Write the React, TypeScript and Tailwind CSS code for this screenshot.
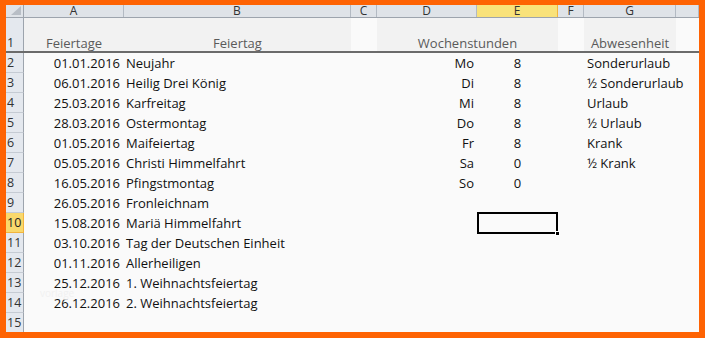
import React from "react";

const COLS = [
  { key: "A", w: "w-[100px]" },
  { key: "B", w: "w-[227px]" },
  { key: "C", w: "w-[26px]" },
  { key: "D", w: "w-[100px]" },
  { key: "E", w: "w-[81px]" },
  { key: "F", w: "w-[26px]" },
  { key: "G", w: "w-[92px]" },
];

const HOLIDAYS = [
  ["01.01.2016", "Neujahr"],
  ["06.01.2016", "Heilig Drei König"],
  ["25.03.2016", "Karfreitag"],
  ["28.03.2016", "Ostermontag"],
  ["01.05.2016", "Maifeiertag"],
  ["05.05.2016", "Christi Himmelfahrt"],
  ["16.05.2016", "Pfingstmontag"],
  ["26.05.2016", "Fronleichnam"],
  ["15.08.2016", "Mariä Himmelfahrt"],
  ["03.10.2016", "Tag der Deutschen Einheit"],
  ["01.11.2016", "Allerheiligen"],
  ["25.12.2016", "1. Weihnachtsfeiertag"],
  ["26.12.2016", "2. Weihnachtsfeiertag"],
  ["", ""],
];

const HOURS = [
  ["Mo", "8"],
  ["Di", "8"],
  ["Mi", "8"],
  ["Do", "8"],
  ["Fr", "8"],
  ["Sa", "0"],
  ["So", "0"],
];

const ABSENCE = ["Sonderurlaub", "½ Sonderurlaub", "Urlaub", "½ Urlaub", "Krank", "½ Krank"];

function RowHeader({ n, active }: { n: number; active?: boolean }) {
  return (
    <div
      className={
        "w-[18px] shrink-0 h-full flex items-center pt-[1px] pl-[1px] text-[12.5px] border-r border-b " +
        (active
          ? "bg-[#f9d86c] border-r-[#f2b43d] border-b-[#f2b43d] text-[#222]"
          : "bg-[#e4e8ee] border-r-[#9da4ad] border-b-[#c5cbd3] text-[#333]")
      }
    >
      {n}
    </div>
  );
}

export default function App() {
  return (
    <div className="w-[705px] h-[338px] bg-[#fe6303] pt-[5px] pl-[6px] pr-[6px] pb-[6px] font-['Open_Sans',sans-serif]">
      <div className="w-full h-full bg-[#fafafa] overflow-hidden relative">
        {/* column headers */}
        <div className="flex h-[13px] bg-[#dfe3e8] border-b border-[#9da4ad]">
          <div className="w-[18px] shrink-0 border-r border-[#9da4ad] relative overflow-hidden">
            <svg className="absolute right-[2px] bottom-[2px]" width="10" height="9" viewBox="0 0 10 9">
              <polygon points="10,0 10,9 0,9" fill="#b8bec6" />
            </svg>
          </div>
          {COLS.map((c) => (
            <div
              key={c.key}
              className={
                c.w +
                " shrink-0 flex items-end justify-center text-[12px] leading-[12px] border-r " +
                (c.key === "E"
                  ? "bg-[#f9e27a] border-[#f2b43d] text-[#333]"
                  : "border-[#b3bac3] text-[#333]")
              }
            >
              {c.key}
            </div>
          ))}
          <div className="flex-1 border-r border-[#b3bac3]" />
        </div>

        {/* row 1 */}
        <div className="flex h-[35px] border-b-2 border-[#6b6b6b] text-[#5a5a5a] text-[13px] leading-[16px]">
          <div className="w-[18px] shrink-0 flex items-end pl-[1px] bg-[#e4e8ee] border-r border-[#9da4ad] text-[#333] text-[12.5px]">
            1
          </div>
          <div className="w-[100px] shrink-0 bg-[#f2f2f2] flex items-end justify-center">Feiertage</div>
          <div className="w-[227px] shrink-0 bg-[#f2f2f2] flex items-end justify-center">Feiertag</div>
          <div className="w-[26px] shrink-0" />
          <div className="w-[181px] shrink-0 bg-[#f2f2f2] flex items-end justify-center">Wochenstunden</div>
          <div className="w-[26px] shrink-0" />
          <div className="w-[92px] shrink-0 bg-[#f2f2f2] flex items-end justify-center">Abwesenheit</div>
          <div className="flex-1" />
        </div>

        {/* data rows */}
        {HOLIDAYS.map(([date, name], i) => {
          const hours = HOURS[i];
          const absence = ABSENCE[i];
          const rowNum = i + 2;
          return (
            <div key={i} className="flex h-[20px] text-[13px] text-[#111]">
              <RowHeader n={rowNum} active={rowNum === 10} />
              <div className="w-[100px] shrink-0 flex items-center pt-[1px] justify-end pr-[4px]">{date}</div>
              <div className="w-[227px] shrink-0 flex items-center pt-[1px] pl-[2px] whitespace-nowrap">{name}</div>
              <div className="w-[26px] shrink-0" />
              <div className="w-[100px] shrink-0 flex items-center pt-[1px] justify-end pr-[3px]">
                {hours ? hours[0] : ""}
              </div>
              <div className="w-[81px] shrink-0 flex items-center pt-[1px] justify-center relative">
                {hours ? hours[1] : ""}
                {rowNum === 10 && (
                  <div className="absolute left-0 top-[-1px] w-[81px] h-[22px] border-2 border-black">
                    <div className="absolute right-[-4px] bottom-[-4px] w-[5px] h-[5px] bg-black border border-white" />
                  </div>
                )}
              </div>
              <div className="w-[26px] shrink-0" />
              <div className="w-[92px] shrink-0 flex items-center pt-[1px] pl-[3px] whitespace-nowrap">
                {absence ?? ""}
              </div>
              <div className="flex-1" />
            </div>
          );
        })}

        <div className="absolute left-[34px] top-[283px] text-[10px] leading-[10px] text-[#f1f1f1]">vorlage</div>
      </div>
    </div>
  );
}
